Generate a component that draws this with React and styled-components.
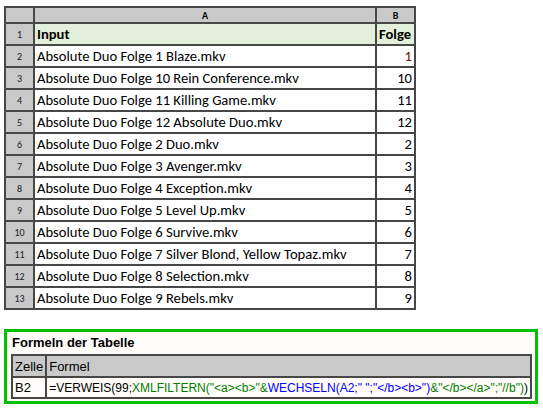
import React from "react";
import styled, { createGlobalStyle } from "styled-components";

const Global = createGlobalStyle`
  body {
    margin: 0;
    padding: 6px 0 0 4px;
    background: #fff;
  }
`;

const Page = styled.div`
  display: flex;
  flex-direction: column;
  gap: 19px;
  width: 535px;
`;

const Sheet = styled.table`
  border-collapse: collapse;
  border: 2px solid #474747;
  font-family: Carlito, Lato, "Liberation Sans", sans-serif;
  font-size: 14.6px;
  color: #000;
  width: 412px;
`;

const ColHead = styled.th`
  background: #c9c9c9;
  border: 2px solid #474747;
  height: 14px;
  padding: 0;
  font-size: 10px;
  font-weight: bold;
  text-align: center;
  width: ${(p) => p.w || "auto"};
`;

const RowHead = styled.td`
  background: #c9c9c9;
  border: 2px solid #474747;
  font-size: 10px;
  text-align: center;
  color: #1a1a2a;
  padding: 0;
`;

const Cell = styled.td`
  border: 2px solid #474747;
  height: 20px;
  padding: 0 2px;
  white-space: nowrap;
  text-align: ${(p) => (p.num ? "right" : "left")};
  font-weight: ${(p) => (p.head ? "bold" : "normal")};
  background: ${(p) => (p.head ? "#e2efda" : "#fff")};
  color: ${(p) => p.color || "#000"};
`;

const FormulaBox = styled.div`
  box-sizing: border-box;
  border: 3px solid #00c000;
  background: #fffcf9;
  padding: 3px 4px 2px 4px;
  width: 534px;
  font-family: "Liberation Sans", Arial, sans-serif;
`;

const BoxTitle = styled.div`
  font-weight: bold;
  font-size: 13px;
  line-height: 15px;
  margin: 0 0 4px 1px;
  color: #000;
`;

const FormulaTable = styled.table`
  border-collapse: collapse;
  border: 2px solid #474747;
  width: 100%;
  font-size: 12px;
`;

const FHead = styled.td`
  background: #c9c9c9;
  border: 2px solid #474747;
  height: 20px;
  padding: 0 2px;
  font-size: 13px;
  width: ${(p) => p.w || "auto"};
`;

const FCell = styled.td`
  border: 2px solid #474747;
  height: 19px;
  padding: 0 2px;
  white-space: nowrap;
  background: #fffcf9;
  font-size: ${(p) => (p.small ? "12px" : "13px")};
`;

const Part = styled.span`
  color: ${(p) => p.c};
`;

const rows = [
  ["Absolute Duo Folge 1 Blaze.mkv", 1],
  ["Absolute Duo Folge 10 Rein Conference.mkv", 10],
  ["Absolute Duo Folge 11 Killing Game.mkv", 11],
  ["Absolute Duo Folge 12 Absolute Duo.mkv", 12],
  ["Absolute Duo Folge 2 Duo.mkv", 2],
  ["Absolute Duo Folge 3 Avenger.mkv", 3],
  ["Absolute Duo Folge 4 Exception.mkv", 4],
  ["Absolute Duo Folge 5 Level Up.mkv", 5],
  ["Absolute Duo Folge 6 Survive.mkv", 6],
  ["Absolute Duo Folge 7 Silver Blond, Yellow Topaz.mkv", 7],
  ["Absolute Duo Folge 8 Selection.mkv", 8],
  ["Absolute Duo Folge 9 Rebels.mkv", 9],
];

export default function App() {
  return (
    <>
      <Global />
      <Page>
        <Sheet>
          <thead>
            <tr>
              <ColHead w="27px"></ColHead>
              <ColHead>A</ColHead>
              <ColHead w="37px">B</ColHead>
            </tr>
          </thead>
          <tbody>
            <tr>
              <RowHead>1</RowHead>
              <Cell head>Input</Cell>
              <Cell head>Folge</Cell>
            </tr>
            {rows.map(([name, n], i) => (
              <tr key={name}>
                <RowHead>{i + 2}</RowHead>
                <Cell>{name}</Cell>
                <Cell num color={i === 0 ? "#7a0f0f" : "#000"}>
                  {n}
                </Cell>
              </tr>
            ))}
          </tbody>
        </Sheet>

        <FormulaBox>
          <BoxTitle>Formeln der Tabelle</BoxTitle>
          <FormulaTable>
            <tbody>
              <tr>
                <FHead w="31px">Zelle</FHead>
                <FHead>Formel</FHead>
              </tr>
              <tr>
                <FCell>B2</FCell>
                <FCell small>
                  <Part c="#000">=VERWEIS(99;</Part>
                  <Part c="#008000">XMLFILTERN("&lt;a&gt;&lt;b&gt;"&amp;</Part>
                  <Part c="#0000ff">WECHSELN(A2;" ";"&lt;/b&gt;&lt;b&gt;")</Part>
                  <Part c="#008000">&amp;"&lt;/b&gt;&lt;/a&gt;";"//b")</Part>
                  <Part c="#000">)</Part>
                </FCell>
              </tr>
            </tbody>
          </FormulaTable>
        </FormulaBox>
      </Page>
    </>
  );
}
